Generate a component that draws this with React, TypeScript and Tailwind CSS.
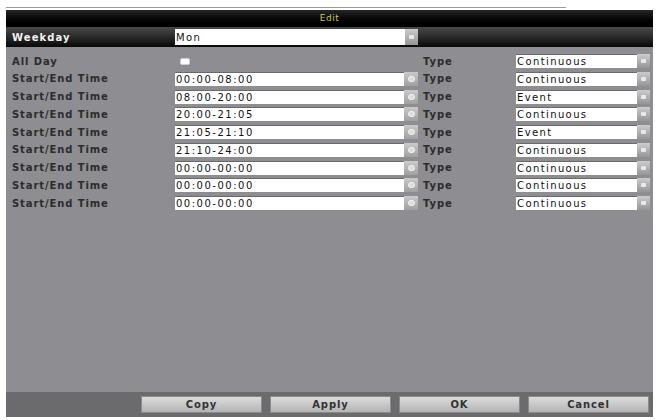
import React from "react";

const rows: { time: string; type: string }[] = [
  { time: "00:00-08:00", type: "Continuous" },
  { time: "08:00-20:00", type: "Event" },
  { time: "20:00-21:05", type: "Continuous" },
  { time: "21:05-21:10", type: "Event" },
  { time: "21:10-24:00", type: "Continuous" },
  { time: "00:00-00:00", type: "Continuous" },
  { time: "00:00-00:00", type: "Continuous" },
  { time: "00:00-00:00", type: "Continuous" },
];

function CircleBtn() {
  return (
    <div className="w-[14px] h-[14px] bg-gradient-to-b from-[#cacaca] to-[#a0a0a0] flex items-center justify-center">
      <div className="w-[7px] h-[6px] rounded-full border border-[#f4f4f4] bg-[#dcdcdc]" />
    </div>
  );
}

function DropBtn({ h = "h-[14px]" }: { h?: string }) {
  return (
    <div className={`w-[13px] ${h} bg-gradient-to-b from-[#cccccc] to-[#969696] flex items-center justify-center`}>
      <div className="w-[5px] h-[4px] bg-[#e8e8e8] rounded-[1px]" />
    </div>
  );
}

function Dropdown({ value }: { value: string }) {
  return (
    <div className="flex items-center">
      <div className="w-[121px] h-[14px] bg-white border-t border-[#6a6a6a] flex items-center pl-[1px] text-[10px] tracking-[1.4px] text-[#111]">
        {value}
      </div>
      <DropBtn />
    </div>
  );
}

export default function App() {
  const font = { fontFamily: '"DejaVu Sans", Verdana, sans-serif' };
  return (
    <div className="w-[656px] h-[420px] bg-white overflow-hidden" style={font}>
      <div className="h-[10px] pl-[6px] pt-[7px]">
        <div className="w-[560px] h-[1px] bg-[#9a9a9a]" />
      </div>
      <div className="ml-[6px] w-[647px] h-[407px] flex flex-col">
        <div className="h-[17px] bg-gradient-to-b from-[#262626] to-[#000000] flex items-center justify-center">
          <span className="text-[9px] text-[#c7c85c] tracking-[0.5px]">Edit</span>
        </div>
        <div className="h-[20px] bg-gradient-to-b from-[#4a4a4a] via-[#2a2a2a] to-[#080808] flex items-center pl-[6px]">
          <div className="w-[163px] text-[10px] font-bold text-[#f2f2f2] tracking-[1.1px]">Weekday</div>
          <div className="w-[230px] h-[16px] bg-white flex items-center pl-[1px] text-[10px] tracking-[1.4px] text-[#111]">
            Mon
          </div>
          <DropBtn h="h-[16px]" />
        </div>
        <div className="flex-1 bg-[#8e8d91] pt-[5px]">
          <div className="h-[18px] flex items-center pl-[6px]">
            <div className="w-[163px] text-[10px] font-bold tracking-[0.9px] text-[#2c2c2c]">All Day</div>
            <div className="w-[248px] flex items-center">
              <div className="ml-[5px] w-[10px] h-[7px] bg-white rounded-[2px] border border-[#d0d0d0]" />
            </div>
            <div className="w-[93px] text-[10px] font-bold tracking-[0.9px] text-[#2c2c2c]">Type</div>
            <Dropdown value="Continuous" />
          </div>
          {rows.map((r, i) => (
            <div key={i} className="h-[17.75px] flex items-center pl-[6px]">
              <div className="w-[163px] text-[10px] font-bold tracking-[0.9px] text-[#2c2c2c]">Start/End Time</div>
              <div className="w-[229px] h-[14px] bg-white border-t border-[#6a6a6a] flex items-center pl-[1px] text-[10px] tracking-[1.5px] text-[#111]">
                {r.time}
              </div>
              <CircleBtn />
              <div className="ml-[5px] w-[93px] text-[10px] font-bold tracking-[0.9px] text-[#2c2c2c]">Type</div>
              <Dropdown value={r.type} />
            </div>
          ))}
        </div>
        <div className="h-[25px] bg-[#6b6b6d] flex items-center justify-end gap-[8px] pr-[4px]">
          {["Copy", "Apply", "OK", "Cancel"].map((b) => (
            <div
              key={b}
              className="w-[121px] h-[17px] bg-gradient-to-b from-[#dcdcdc] to-[#b4b4b4] border border-[#8a8a8a] flex items-center justify-center text-[10px] font-bold tracking-[0.9px] text-[#333]"
            >
              {b}
            </div>
          ))}
        </div>
      </div>
    </div>
  );
}
